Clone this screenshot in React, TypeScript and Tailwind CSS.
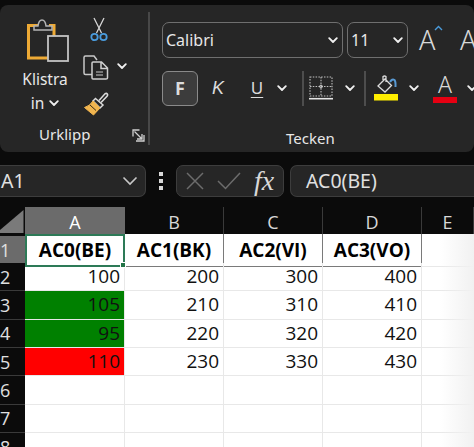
import React from "react";

const ui = "font-['Noto_Sans','Open_Sans',sans-serif]";

function Chevron({ className = "", size = 10 }: { className?: string; size?: number }) {
  return (
    <svg width={size} height={size} viewBox="0 0 10 10" className={className} fill="none">
      <path d="M1.2 3.2 L5 7 L8.8 3.2" stroke="#f0f0f0" strokeWidth="1.8" strokeLinecap="round" strokeLinejoin="round" />
    </svg>
  );
}

function PasteIcon() {
  return (
    <svg width="46" height="46" viewBox="0 0 46 46" fill="none">
      <path d="M14 8.5 H3.5 V41 H26 M29 28 V8.5 H24" stroke="#eeaa35" strokeWidth="3" />
      <path d="M9 13 V9 H13 C13.5 5 15.5 3 17 3 C19 3 20.5 5 21 9 H27 V13 Z" fill="#262626" stroke="#b5b5b5" strokeWidth="1.5" />
      <rect x="23" y="19" width="20" height="25" fill="#262626" stroke="#c4c4c4" strokeWidth="1.8" />
    </svg>
  );
}

function ScissorsIcon() {
  return (
    <svg width="18" height="25" viewBox="0 0 18 25" fill="none">
      <path d="M4 1 L11.5 16 M14 1 L6.5 16" stroke="#d6d6d6" strokeWidth="1.3" />
      <circle cx="4.5" cy="20" r="3.2" stroke="#4a9bdc" strokeWidth="1.8" />
      <circle cx="13.5" cy="20" r="3.2" stroke="#4a9bdc" strokeWidth="1.8" />
    </svg>
  );
}

function CopyIcon() {
  return (
    <svg width="26" height="25" viewBox="0 0 26 25" fill="none">
      <path d="M9 19.5 H2.5 Q1 19.5 1 18 V2.5 Q1 1 2.5 1 H11 L14 5" stroke="#c8c8c8" strokeWidth="1.5" />
      <path d="M10 7 H18.5 L24.5 13 V23 Q24.5 24 23 24 H10 Q9 24 9 23 V8 Q9 7 10 7 Z M18 7 V13.5 H24.5" fill="#262626" stroke="#d0d0d0" strokeWidth="1.5" />
      <path d="M13 17 H20 M13 20 H20" stroke="#c8c8c8" strokeWidth="1.2" />
    </svg>
  );
}

function BrushIcon() {
  return (
    <svg width="26" height="24" viewBox="0 0 26 24" fill="none">
      <path d="M16 8.5 L22 1.8 Q23.5 1 24.3 2 Q25 3 24 4.2 L18 10.5" stroke="#dcdcdc" strokeWidth="1.6" />
      <path d="M12.5 6.5 L20 13 L17 16 L10 9 Z" fill="#262626" stroke="#dcdcdc" strokeWidth="1.5" />
      <path d="M10 9 L17 16 L10.5 23 L1.5 15.5 Q7 14 10 9 Z" fill="#f1b54f" stroke="#f1b54f" strokeWidth="1" />
      <path d="M7 13 L13 18.5" stroke="#3a2d18" strokeWidth="1" />
    </svg>
  );
}

function LauncherIcon() {
  return (
    <svg width="13" height="13" viewBox="0 0 13 13" fill="none">
      <path d="M7.5 1 H1 V7.5 M4 12 H12 V6" stroke="#d0d0d0" strokeWidth="1.3" />
      <path d="M2.5 2.5 L10 10 M10 5 V10 H5" stroke="#d0d0d0" strokeWidth="1.3" />
    </svg>
  );
}

function GrowIcon({ up }: { up: boolean }) {
  return (
    <span className="relative flex h-[36px] shrink-0 items-center pb-[2px] text-[27px] font-light leading-none text-[#d8d8d8]">
      A
      <svg width="9" height="7" viewBox="0 0 9 7" fill="none" className="absolute left-[15px] top-[3px]">
        <path d={up ? "M1 5 L4.5 1.5 L8 5" : "M1 2 L4.5 5.5 L8 2"} stroke="#4a9bdc" strokeWidth="1.4" />
      </svg>
    </span>
  );
}

function BordersIcon() {
  return (
    <svg width="24" height="24" viewBox="0 0 24 24" fill="none">
      <path d="M1 1 H23 V20 H1 Z M12 1 V20 M1 10.5 H23" stroke="#bdbdbd" strokeWidth="1.1" strokeDasharray="1.5 1.3" />
      <circle cx="12" cy="10.5" r="1.4" stroke="#dcdcdc" strokeWidth="0.9" />
      <path d="M0 22.7 H24" stroke="#e6e6e6" strokeWidth="1.6" />
    </svg>
  );
}

function FillIcon() {
  return (
    <svg width="24" height="26" viewBox="0 0 24 26" fill="none">
      <path d="M4 11 L11 4 L17.5 10.5 L11 17 Z M9 5 V1.5 Q10.5 0.5 12 1.5 V7" stroke="#dcdcdc" strokeWidth="1.3" />
      <path d="M16 7 Q18 3.5 20.5 5 Q21.8 6.5 21.5 12" stroke="#5a9bd5" strokeWidth="2" />
      <rect x="0" y="19" width="24" height="6.5" fill="#ffee00" />
    </svg>
  );
}

function FontColorIcon() {
  return (
    <span className="flex w-[24px] flex-col items-center">
      <span className="h-[20px] text-[23px] font-light leading-[20px] text-[#d8d8d8]">A</span>
      <span className="mt-[3px] h-[6px] w-[24px] bg-[#e60012]" />
    </span>
  );
}

function Sep() {
  return <span className="block h-[35px] w-[2px] bg-[#4d4d4d]" />;
}

function Ribbon() {
  return (
    <div className={`flex h-[147px] rounded-[8px] bg-[#262626] text-[#e8e8e8] ${ui}`}>
      {/* Urklipp */}
      <div className="my-[7px] flex h-[133px] w-[150px] shrink-0 flex-col border-r-2 border-[#484848]">
        <div className="flex h-[106px] pt-[5px]">
          <div className="ml-[18px] flex w-[54px] flex-col items-center">
            <div className="ml-[6px]"><PasteIcon /></div>
            <span className="mt-[4px] text-[15.5px] leading-[24px]">Klistra</span>
            <span className="flex items-center gap-[5px] text-[15.5px] leading-[24px]">in <Chevron /></span>
          </div>
          <div className="ml-[11px] flex w-[48px] flex-col">
            <div className="ml-[7px] h-[38px]"><ScissorsIcon /></div>
            <div className="flex h-[36px] items-start gap-[8px]"><CopyIcon /><span className="mt-[6px]"><Chevron /></span></div>
            <div className="mt-[1px]"><BrushIcon /></div>
          </div>
        </div>
        <div className="relative flex flex-1 items-center pl-[39px] pt-[7px] text-[15px]">
          Urklipp
          <span className="absolute left-[132px] top-[13px]"><LauncherIcon /></span>
        </div>
      </div>
      {/* Tecken */}
      <div className="flex min-w-0 flex-1 flex-col pl-[12px]">
        <div className="mt-[17px] flex h-[36px] items-center">
          <div className="flex h-[36px] w-[181px] shrink-0 items-center justify-between rounded-[7px] border border-[#6f6f6f] pl-[3px] pr-[4px] text-[16px]">
            Calibri <Chevron />
          </div>
          <div className="ml-[4px] flex h-[36px] w-[61px] shrink-0 items-center justify-between rounded-[7px] border border-[#6f6f6f] pl-[3px] pr-[4px] text-[16px]">
            11 <Chevron />
          </div>
          <div className="ml-[11px] w-[41px] shrink-0"><GrowIcon up /></div>
          <GrowIcon up={false} />
        </div>
        <div className="mt-[12px] flex h-[36px] items-center">
          <div className="flex h-[35px] w-[36px] shrink-0 items-center justify-center rounded-[6px] border border-[#8a8a8a] bg-[#3c3c3c] text-[18px] font-bold text-[#dcdcdc]">F</div>
          <span className="ml-[14px] w-[24px] shrink-0 font-['Liberation_Sans',sans-serif] text-[18px] italic text-[#dcdcdc]">K</span>
          <span className="ml-[10px] w-[22px] shrink-0 text-center text-[17px] leading-[20px] text-[#dcdcdc] underline underline-offset-[3px]">U</span>
          <span className="ml-[9px] shrink-0"><Chevron /></span>
          <span className="ml-[15px] shrink-0"><Sep /></span>
          <span className="ml-[5px] flex shrink-0"><BordersIcon /></span>
          <span className="ml-[12px] shrink-0"><Chevron /></span>
          <span className="ml-[9px] shrink-0"><Sep /></span>
          <span className="ml-[8px] flex shrink-0"><FillIcon /></span>
          <span className="ml-[11px] shrink-0"><Chevron /></span>
          <span className="ml-[14px] shrink-0"><FontColorIcon /></span>
          <span className="ml-[10px] shrink-0"><Chevron /></span>
        </div>
        <div className="mt-[21px] pl-[124px] text-[15px]">Tecken</div>
      </div>
    </div>
  );
}

function FormulaBar() {
  return (
    <div className={`flex h-[55px] items-center bg-[#0b0b0b] pb-[5px] pt-[8px] text-[#e0e0e0] ${ui}`}>
      <div className="flex h-[32px] w-[146px] shrink-0 items-center justify-between rounded-r-[7px] border border-l-0 border-[#3d3d3d] bg-[#262626] pl-[1px] pr-[7px] text-[19.5px]">
        A1
        <svg width="16" height="10" viewBox="0 0 16 10" fill="none"><path d="M1.5 1.5 L8 8 L14.5 1.5" stroke="#c8c8c8" strokeWidth="1.6" /></svg>
      </div>
      <div className="flex w-[30px] shrink-0 flex-col items-center gap-[3px]">
        <span className="h-[4px] w-[4px] bg-[#d8d8d8]" />
        <span className="h-[4px] w-[4px] bg-[#d8d8d8]" />
        <span className="h-[4px] w-[4px] bg-[#d8d8d8]" />
      </div>
      <div className="flex h-[32px] w-[108px] shrink-0 items-center rounded-[7px] border border-[#3d3d3d] bg-[#262626] pl-[9px]">
        <svg width="18" height="18" viewBox="0 0 18 18" fill="none"><path d="M1 1 L17 17 M17 1 L1 17" stroke="#6c6c6c" strokeWidth="1.5" /></svg>
        <svg width="24" height="18" viewBox="0 0 24 18" fill="none" className="ml-[13px]"><path d="M1 9 L8.5 16.5 L23 1" stroke="#6c6c6c" strokeWidth="1.5" /></svg>
        <span className="ml-[13px] font-['Liberation_Serif',serif] text-[28px] italic leading-none text-[#d8d8d8]">fx</span>
      </div>
      <div className="ml-[6px] flex h-[32px] flex-1 items-center rounded-l-[7px] border border-r-0 border-[#3d3d3d] bg-[#262626] pl-[15px] text-[19.5px]">
        AC0(BE)
      </div>
    </div>
  );
}

const colWidths = "grid-cols-[25px_100px_99px_99px_99px_1fr]";
const headers = ["A", "B", "C", "D", "E"];
const titles = ["AC0(BE)", "AC1(BK)", "AC2(VI)", "AC3(VO)", ""];
const rows: (string | number)[][] = [
  [100, 200, 300, 400, ""],
  [105, 210, 310, 410, ""],
  [95, 220, 320, 420, ""],
  [110, 230, 330, 430, ""],
  ["", "", "", "", ""],
  ["", "", "", "", ""],
  ["", "", "", "", ""],
];

function RowHead({ n, active }: { n: number; active?: boolean }) {
  return (
    <div className={`flex items-center justify-start border-b text-[18px] leading-none text-[#e0e0e0] ${active ? "border-[#555] bg-[#6b6b6b]" : "border-[#3a3a3a] bg-[#0b0b0b]"}`}>
      {n}
    </div>
  );
}

function Sheet() {
  return (
    <div className="relative bg-white font-['Open_Sans',sans-serif]">
      <div className={`grid h-[27px] ${colWidths} bg-[#0b0b0b] text-[#d8d8d8]`}>
        <div className="relative overflow-hidden bg-[#0b0b0b]">
          <svg width="25" height="27" viewBox="0 0 25 27" className="absolute inset-0"><path d="M23.5 3 V26 H0 V23 Z" fill="#7a7a7a" /></svg>
        </div>
        {headers.map((h, i) => (
          <div key={h} className={`flex items-center justify-center pt-[2px] text-[18px] ${i === 0 ? "bg-[#6b6b6b] text-white" : "border-r border-[#3a3a3a]"}`}>
            {h}
          </div>
        ))}
      </div>
      <div className={`grid h-[29px] ${colWidths}`}>
        <RowHead n={1} active />
        {titles.map((t, i) =>
          i === 0 ? (
            <div key={i} className="relative flex items-center justify-center border-2 border-[#2d7a57] text-[19px] font-bold text-black">
              {t}
              <span className="absolute -bottom-[3px] -right-[3px] h-[6px] w-[6px] border border-white bg-[#217346]" />
            </div>
          ) : t ? (
            <div key={i} className="flex items-center justify-center border-b border-r border-[#7a7a7a] text-[19px] font-bold text-black">{t}</div>
          ) : (
            <div key={i} className="border-b border-[#e8e8e8]" />
          )
        )}
      </div>
      {rows.map((r, ri) => (
        <div key={ri} className={`grid h-[28.33px] ${colWidths}`}>
          <RowHead n={ri + 2} />
          {r.map((v, ci) => {
            const bg = ci === 0 && (ri === 1 || ri === 2) ? "bg-[#008000]" : ci === 0 && ri === 3 ? "bg-[#ff0000]" : "";
            return (
              <div key={ci} className={`flex items-center justify-end border-b border-r border-[#e8e8e8] pr-[4px] text-[19px] leading-none text-[#111] ${bg}`}>
                {v}
              </div>
            );
          })}
        </div>
      ))}
      <div className="pointer-events-none absolute bottom-0 right-0 top-[27px] w-[34px] bg-gradient-to-r from-transparent to-[#f1f1f1]" />
    </div>
  );
}

export default function App() {
  return (
    <div className="h-[447px] w-[474px] overflow-hidden bg-[#0b0b0b]">
      <div className="h-[5px]" />
      <Ribbon />
      <FormulaBar />
      <Sheet />
    </div>
  );
}
